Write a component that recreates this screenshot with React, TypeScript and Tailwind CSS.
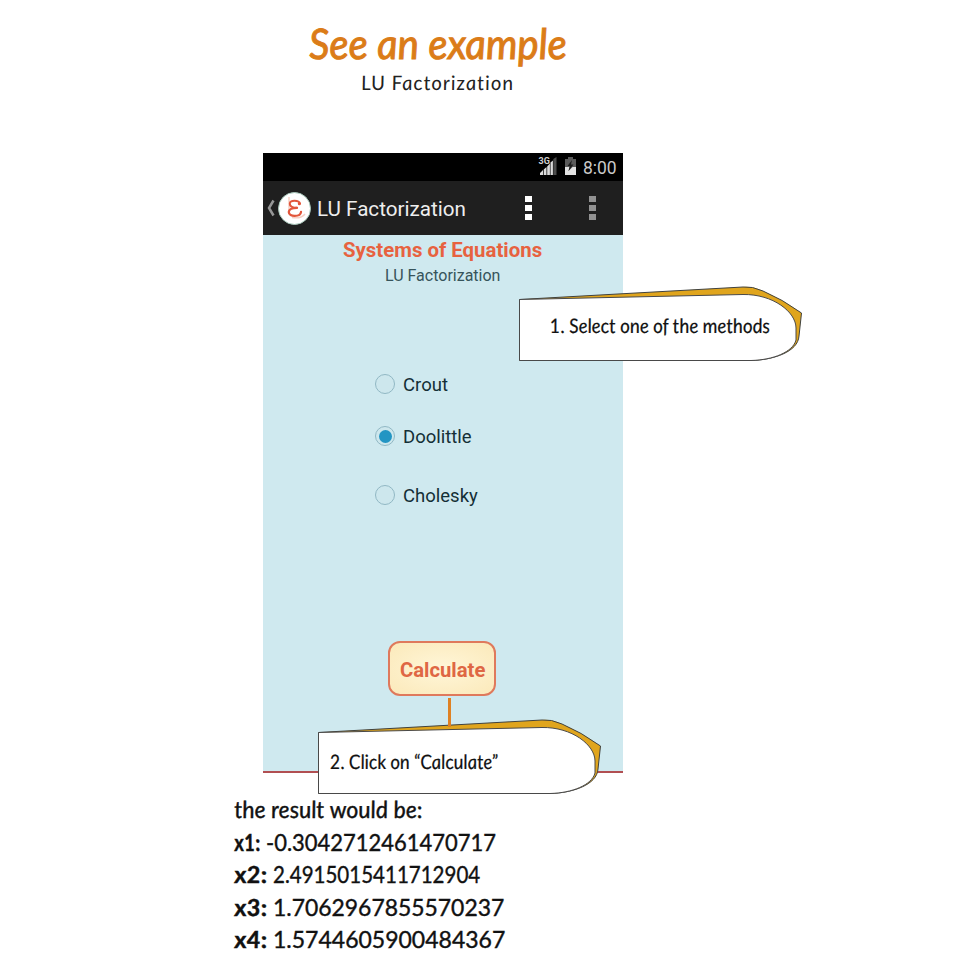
import { useLayoutEffect, useRef, type ReactNode } from "react";

/** One line of text squeezed or stretched to an exact width. */
function FitText({ width, className = "", children }: { width: number; className?: string; children: ReactNode }) {
  const ref = useRef<HTMLSpanElement>(null);
  useLayoutEffect(() => {
    const el = ref.current;
    if (el) el.style.transform = `scaleX(${width / el.offsetWidth})`;
  }, [width]);
  return (
    <div className={className} style={{ width }}>
      <span ref={ref} className="block w-max origin-left whitespace-pre">
        {children}
      </span>
    </div>
  );
}

function Dots({ className }: { className: string }) {
  return (
    <div className="flex flex-col gap-[3px]">
      <i className={`h-[6px] w-[7px] ${className}`} />
      <i className={`h-[6px] w-[7px] ${className}`} />
      <i className={`h-[6px] w-[7px] ${className}`} />
    </div>
  );
}

function StatusIcons() {
  return (
    <svg width="40" height="24" viewBox="0 0 40 24" className="shrink-0">
      <text x="0.500" y="11" fontSize="9" fontFamily="Roboto, sans-serif" fontWeight="700" fill="#d0d0d0">3G</text>
      <path d="M2 22v-2l3-3v5zM5.700 22v-5.500l2.800-2.500V22zM9.200 22V13.500l2.700-3V22zM12.500 22V9.500l2.400-2V22z" fill="#dcdcdc" />
      <path d="M15.300 22V6l3.200-2v18z" fill="#4c4c4c" />
      <path d="M27 6h3V4h5v2h3v16H27z" fill="#5a5a5a" />
      <path d="M27 14h4.500l-1 4 4-4H38v8H27z" fill="#e2e2e2" />
      <path d="M34 7l-4.500 6h2.300l-1.300 5 5-6.500H33z" fill="#1c1c1c" />
    </svg>
  );
}

function Radio({ label, width, checked = false }: { label: string; width: number; checked?: boolean }) {
  return (
    <div className="flex h-6 items-center gap-[8px]">
      <span className="flex size-[20px] items-center justify-center rounded-full border-[1.5px] border-[#91b8c4] bg-[#cde7ed]">
        {checked && <span className="size-[13px] rounded-full bg-[#2395c3]" />}
      </span>
      <FitText width={width} className="pt-[2px] text-[18.5px] leading-6 text-[#142f36]">{label}</FitText>
    </div>
  );
}

function Callout({ children }: { children: ReactNode }) {
  return (
    <div className="relative h-[76px] w-[286px]">
      <svg width="286" height="76" viewBox="0 0 286 76" className="absolute inset-0">
        <path d="M1.500 13.500L225 1Q234 0 245 5Q264 13 283.500 27L281 50C280 66 255 74 233 74.500L1.500 74.500Z" fill="#e0a51d" stroke="#40423f" strokeWidth="1" />
        <path d="M1.500 13.500L225 8.500C255 8 278 26 278 42L278 54C275 66 255 74 233 74.500L1.500 74.500Z" fill="#fff" stroke="#494949" strokeWidth="1" />
      </svg>
      <div className="relative">{children}</div>
    </div>
  );
}

const results = [
  { name: "x1:", value: "-0.3042712461470717", nameWidth: 26, width: 230 },
  { name: "x2:", value: "2.4915015411712904", nameWidth: 33, width: 207 },
  { name: "x3:", value: "1.7062967855570237", nameWidth: 33, width: 231 },
  { name: "x4:", value: "1.5744605900484367", nameWidth: 33, width: 232 },
];

export default function App() {
  return (
    <main className="relative h-[960px] w-[960px] overflow-hidden bg-white font-['Lato',sans-serif] text-[#111] [font-variant-ligatures:none]">
      <header className="h-[153px] pt-[18px]">
        <FitText width={258} className="ml-[309px] h-[52px] skew-x-3 text-[42px] leading-[51px] text-[#db7c18] italic [-webkit-text-stroke:1px_#db7c18]">See an example</FitText>
        <FitText width={153} className="ml-[361px] h-7 skew-x-6 text-[20px] leading-[25px] tracking-[1px] text-[#222] italic">LU Factorization</FitText>
      </header>

      <section className="ml-[263px] flex h-[620px] w-[360px] flex-col border-b-2 border-[#b14f52] bg-[#cfe9ef] font-['Roboto',sans-serif]">
        <div className="flex h-[28px] justify-end bg-black pr-[6px]">
          <StatusIcons />
          <FitText width={34} className="ml-[5px] text-[18.5px] leading-[30px] text-[#c9c9c9]">8:00</FitText>
        </div>
        <div className="flex h-[54px] items-center bg-[#1f1f1f]">
          <svg width="12" height="20" viewBox="0 0 12 20" className="ml-[2px]">
            <path d="M8.500 2.500L4 10l4.500 7.500" fill="none" stroke="#969696" strokeWidth="2.500" />
          </svg>
          <div className="ml-px flex size-[33px] items-center justify-center rounded-full border border-[#a9c9bc] bg-white">
            <svg width="24" height="28" viewBox="0 0 24 28" className="shrink-0">
              <path d="M6 3V20M9 23.500C15 24.500 19 24 22 20" fill="none" stroke="#f5cfc5" strokeWidth="1.500" />
              <path d="M17 9.500C16 6 6.800 5.500 6.800 9.700C6.800 13 10.500 13.800 14 13.800" fill="none" stroke="#e2573c" strokeWidth="2" strokeLinecap="round" />
              <path d="M14 13.800C9 13.800 5.800 15.500 5.800 18C5.800 23.500 17.500 23 18 18" fill="none" stroke="#e2573c" strokeWidth="2.300" strokeLinecap="round" />
              <circle cx="16.300" cy="9.700" r="1.500" fill="#e2573c" />
            </svg>
          </div>
          <FitText width={149} className="ml-[6px] pt-[2px] text-[20.5px] leading-[54px] text-[#eee]">LU Factorization</FitText>
          <div className="ml-[59px]"><Dots className="bg-white" /></div>
          <div className="ml-[57px]"><Dots className="bg-[#929292]" /></div>
        </div>

        <div className="flex flex-col">
          <FitText width={199} className="ml-[80px] h-[29px] text-[20.5px] leading-[31px] font-bold text-[#e7623f]">Systems of Equations</FitText>
          <FitText width={115} className="ml-[122px] h-[24px] text-[16px] leading-[23px] text-[#36545b]">LU Factorization</FitText>
          <div className="mt-[84px] ml-[112px] flex flex-col">
            <Radio label="Crout" width={45} />
            <div className="mt-[28px]"><Radio label="Doolittle" width={69} checked /></div>
            <div className="mt-[35px]"><Radio label="Cholesky" width={75} /></div>
          </div>
          <button className="mt-[134px] ml-[125px] flex h-[55px] w-[108px] items-center justify-center rounded-[12px] border-2 border-[#df795c] bg-radial from-[#fff6d8] to-[#fbe9ba] text-[#df6744]">
            <FitText width={85} className="pt-[2px] text-[20.5px] leading-6 font-bold">Calculate</FitText>
          </button>
          <div className="mt-[2px] ml-[185px] h-[30px] w-[3px] bg-[#df8123]" />
        </div>
      </section>

      <section className="ml-[234px] pt-[20px] text-[23.5px] leading-[32.6px] [-webkit-text-stroke:0.4px_#111]">
        <FitText width={188} className="skew-x-6 italic">the result would be:</FitText>
        {results.map((r) => (
          <div key={r.name} className="flex gap-[6px]">
            <FitText width={r.nameWidth} className="skew-x-6 font-bold italic">{r.name}</FitText>
            <FitText width={r.width}>{r.value}</FitText>
          </div>
        ))}
      </section>

      <div className="absolute top-[286px] left-[518px]">
        <Callout>
          <FitText width={220} className="ml-[30px] skew-x-6 pt-[24px] text-[20px] leading-[30px] italic [-webkit-text-stroke:0.2px_#111]">1. Select one of the methods</FitText>
        </Callout>
      </div>
      <div className="absolute top-[719px] left-[317px]">
        <Callout>
          <FitText width={169} className="ml-[11px] skew-x-6 pt-[27px] text-[20px] leading-[30px] italic [-webkit-text-stroke:0.2px_#111]">2. Click on “Calculate”</FitText>
        </Callout>
      </div>
      <div className="absolute top-[698px] left-[448px] h-[29px] w-[3px] bg-[#df8123]" />
    </main>
  );
}
